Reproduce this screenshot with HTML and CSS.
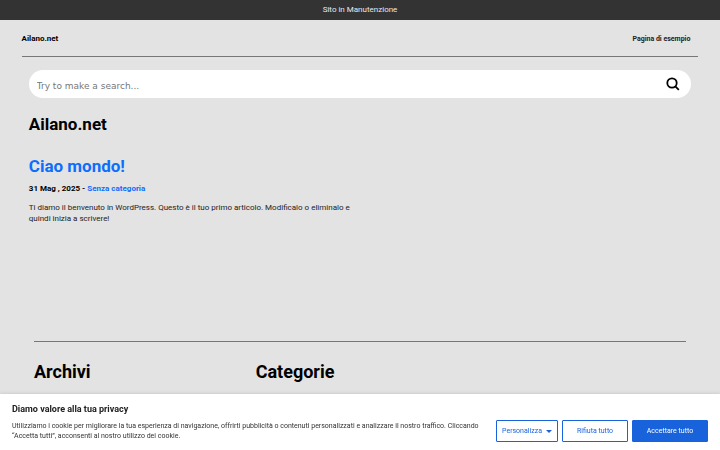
FILE: index.html
```html
<!DOCTYPE html>
<html lang="it">
<head>
  <meta charset="UTF-8" />
  <meta name="viewport" content="width=device-width, initial-scale=1" />
  <title>Ailano.net</title>
  <link rel="stylesheet" href="styles.css">
</head>
<body>
  <div class="notice">Sito in Manutenzione</div>

  <header class="site-header">
    <a class="brand" href="#">Ailano.net</a>
    <nav>
      <a class="nav-link" href="#">Pagina di esempio</a>
    </nav>
  </header>

  <main class="content">
    <form class="search" role="search">
      <input type="search" class="search-input" placeholder="Try to make a search..." aria-label="Search" />
      <button type="submit" class="search-button" aria-label="Search">
        <svg viewBox="0 0 14 14" width="14" height="14" fill="none" stroke="#000" stroke-width="1.8">
          <circle cx="6" cy="6" r="4.7" />
          <path d="M9.3 9.3 L12.8 12.8" />
        </svg>
      </button>
    </form>

    <h1>Ailano.net</h1>

    <article class="post">
      <h2><a href="#">Ciao mondo!</a></h2>
      <p class="post-meta">31 Mag , 2025 - <a href="#">Senza categoria</a></p>
      <p class="post-text">Ti diamo il benvenuto in WordPress. Questo è il tuo primo articolo. Modificalo o eliminalo e quindi inizia a scrivere!</p>
    </article>
  </main>

  <footer class="site-footer">
    <section><h2>Archivi</h2></section>
    <section><h2>Categorie</h2></section>
  </footer>

  <!-- Cookie banner -->
  <div class="cookie-banner">
    <h3>Diamo valore alla tua privacy</h3>
    <div class="cookie-row">
      <p>Utilizziamo i cookie per migliorare la tua esperienza di navigazione, offrirti pubblicità o contenuti personalizzati e analizzare il nostro traffico. Cliccando “Accetta tutti”, acconsenti al nostro utilizzo dei cookie.</p>
      <div class="cookie-buttons">
        <button type="button" class="btn btn-custom">Personalizza</button>
        <button type="button" class="btn btn-reject">Rifiuta tutto</button>
        <button type="button" class="btn btn-accept">Accettare tutto</button>
      </div>
    </div>
  </div>
</body>
</html>
```
FILE: styles.css
```css
* {
  box-sizing: border-box;
}

html {
  overflow: hidden;
}

body {
  margin: 0;
  font-family: Roboto, sans-serif;
  font-size: 8px;
  color: #000;
  background: #e3e3e3;
}

a {
  color: #0d6efd;
  text-decoration: none;
}

h1,
h2,
h3,
p {
  margin: 0;
}

h1,
h2 {
  font-size: 18px;
  line-height: 22px;
}

.notice {
  padding: 4px 0;
  line-height: 12px;
  text-align: center;
  color: #e8e8e8;
  background: #333;
}

/* Header */
.site-header {
  display: flex;
  justify-content: space-between;
  align-items: center;
  height: 37px;
  margin: 0 3%;
  border-bottom: 1px solid #777;
  font-weight: bold;
}

.brand {
  color: #000;
}

.nav-link {
  padding-right: 8px;
  font-size: 7px;
  color: #222;
}

.content {
  min-height: 284px;
  padding: 13px 4% 0;
}

/* Search */
.search {
  display: flex;
  align-items: center;
  height: 28px;
  padding: 0 11px 0 8px;
  border-radius: 14px;
  background: #fff;
}

.search-input {
  flex: 1;
  padding: 3px 0 0;
  border: none;
  outline: none;
  font-family: "DejaVu Sans", sans-serif;
  font-size: 9px;
  background: none;
}

.search-input::placeholder {
  color: #777;
}

.search-button {
  display: flex;
  padding: 0;
  border: none;
  background: none;
  cursor: pointer;
}

.content h1,
.content h2 {
  font-size: 17px;
}

h1 {
  margin-top: 15px;
}

/* Post */
.post {
  width: 50%;
  margin-top: 20px;
}

.post-meta {
  margin-top: 6px;
  font-weight: bold;
  line-height: 11px;
}

.post-text {
  margin-top: 8px;
  line-height: 11px;
  color: #222;
}

/* Footer */
.site-footer {
  display: grid;
  grid-template-columns: 34% 66%;
  margin: 0 34px;
  padding: 19px 0 80px;
  border-top: 1px solid #777;
}

/* Cookie banner */
.cookie-banner {
  position: fixed;
  left: 0;
  right: 0;
  bottom: 0;
  padding: 9px 12px 8px;
  background: #fff;
  box-shadow: 0 -1px 3px rgba(0, 0, 0, 0.1);
}

.cookie-banner h3 {
  font-size: 9px;
  line-height: 12px;
  color: #212121;
}

.cookie-row {
  display: flex;
  justify-content: space-between;
  align-items: center;
  gap: 16px;
  margin-top: 5px;
}

.cookie-row p {
  font-size: 7px;
  line-height: 10px;
  color: #333;
}

.cookie-buttons {
  display: flex;
  flex: none;
  gap: 4px;
}

.btn {
  height: 22px;
  padding: 0;
  border: 1px solid #1863dc;
  border-radius: 1px;
  font-family: inherit;
  font-size: 7px;
  color: #1863dc;
  background: #fff;
  cursor: pointer;
}

.btn-custom {
  width: 62px;
}

.btn-custom::after {
  content: "";
  display: inline-block;
  margin-left: 4px;
  border: 3px solid transparent;
  border-top: 3px solid #1863dc;
  border-bottom: none;
  vertical-align: middle;
}

.btn-reject {
  width: 66px;
}

.btn-accept {
  width: 76px;
  color: #fff;
  background: #1863dc;
}
```
